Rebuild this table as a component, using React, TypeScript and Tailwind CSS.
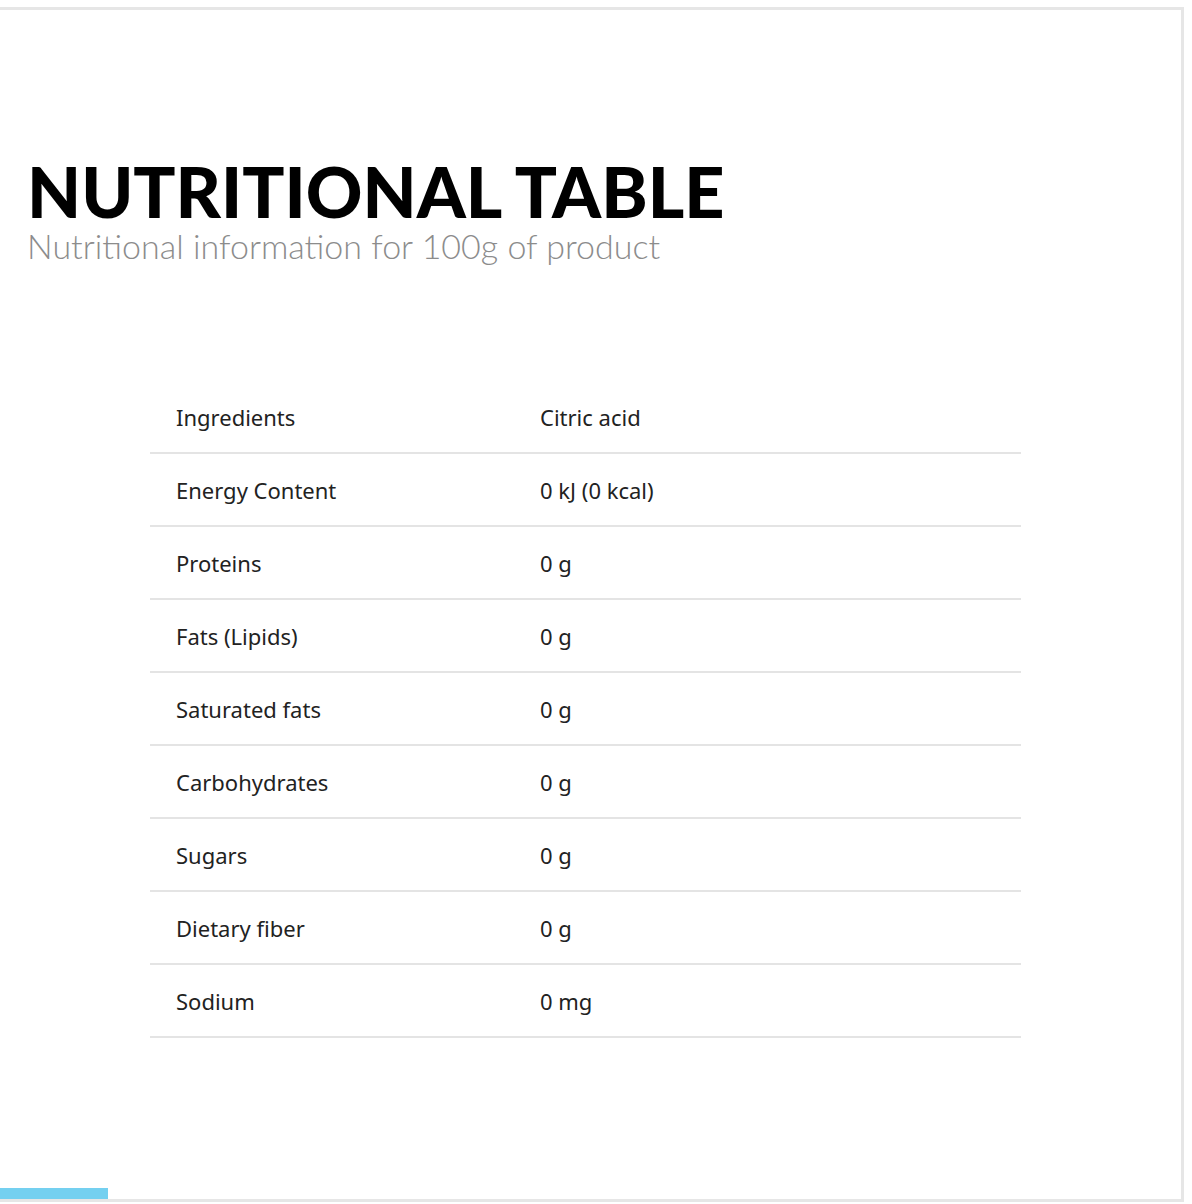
export default function App() {
  const rows: [string, string][] = [
    ["Ingredients", "Citric acid"],
    ["Energy Content", "0 kJ (0 kcal)"],
    ["Proteins", "0 g"],
    ["Fats (Lipids)", "0 g"],
    ["Saturated fats", "0 g"],
    ["Carbohydrates", "0 g"],
    ["Sugars", "0 g"],
    ["Dietary fiber", "0 g"],
    ["Sodium", "0 mg"],
  ];
  return (
    <div className="w-[1192px] h-[1204px] bg-white pt-[7px] overflow-hidden">
      <div className="relative w-[1184px] h-[1195px] border-t-[3px] border-r-[3px] border-b-[3px] border-[#e6e6e6] bg-white">
        <div className="pl-[27px] pt-[146px]">
          <h1
            className="text-[70px] leading-[70px] font-black text-black"
            style={{ fontFamily: "Lato, sans-serif" }}
          >
            NUTRITIONAL TABLE
          </h1>
          <p
            className="text-[34px] leading-[40px] text-[#8c8c8c] font-light"
            style={{ fontFamily: "Lato, sans-serif" }}
          >
            Nutritional information for 100g of product
          </p>
        </div>
        <div className="ml-[150px] mt-[115px] w-[871px]" style={{ fontFamily: "'Noto Sans', sans-serif" }}>
          {rows.map(([k, v]) => (
            <div key={k} className="flex items-center h-[73px] border-b-2 border-[#e4e4e4] text-[22px] text-[#222]">
              <div className="w-[390px] pl-[26px] pt-[1px]">{k}</div>
              <div className="pt-[1px]">{v}</div>
            </div>
          ))}
        </div>
        <div className="absolute left-0 bottom-0 w-[108px] h-[11px] bg-[#74d0f0]" />
      </div>
    </div>
  );
}
